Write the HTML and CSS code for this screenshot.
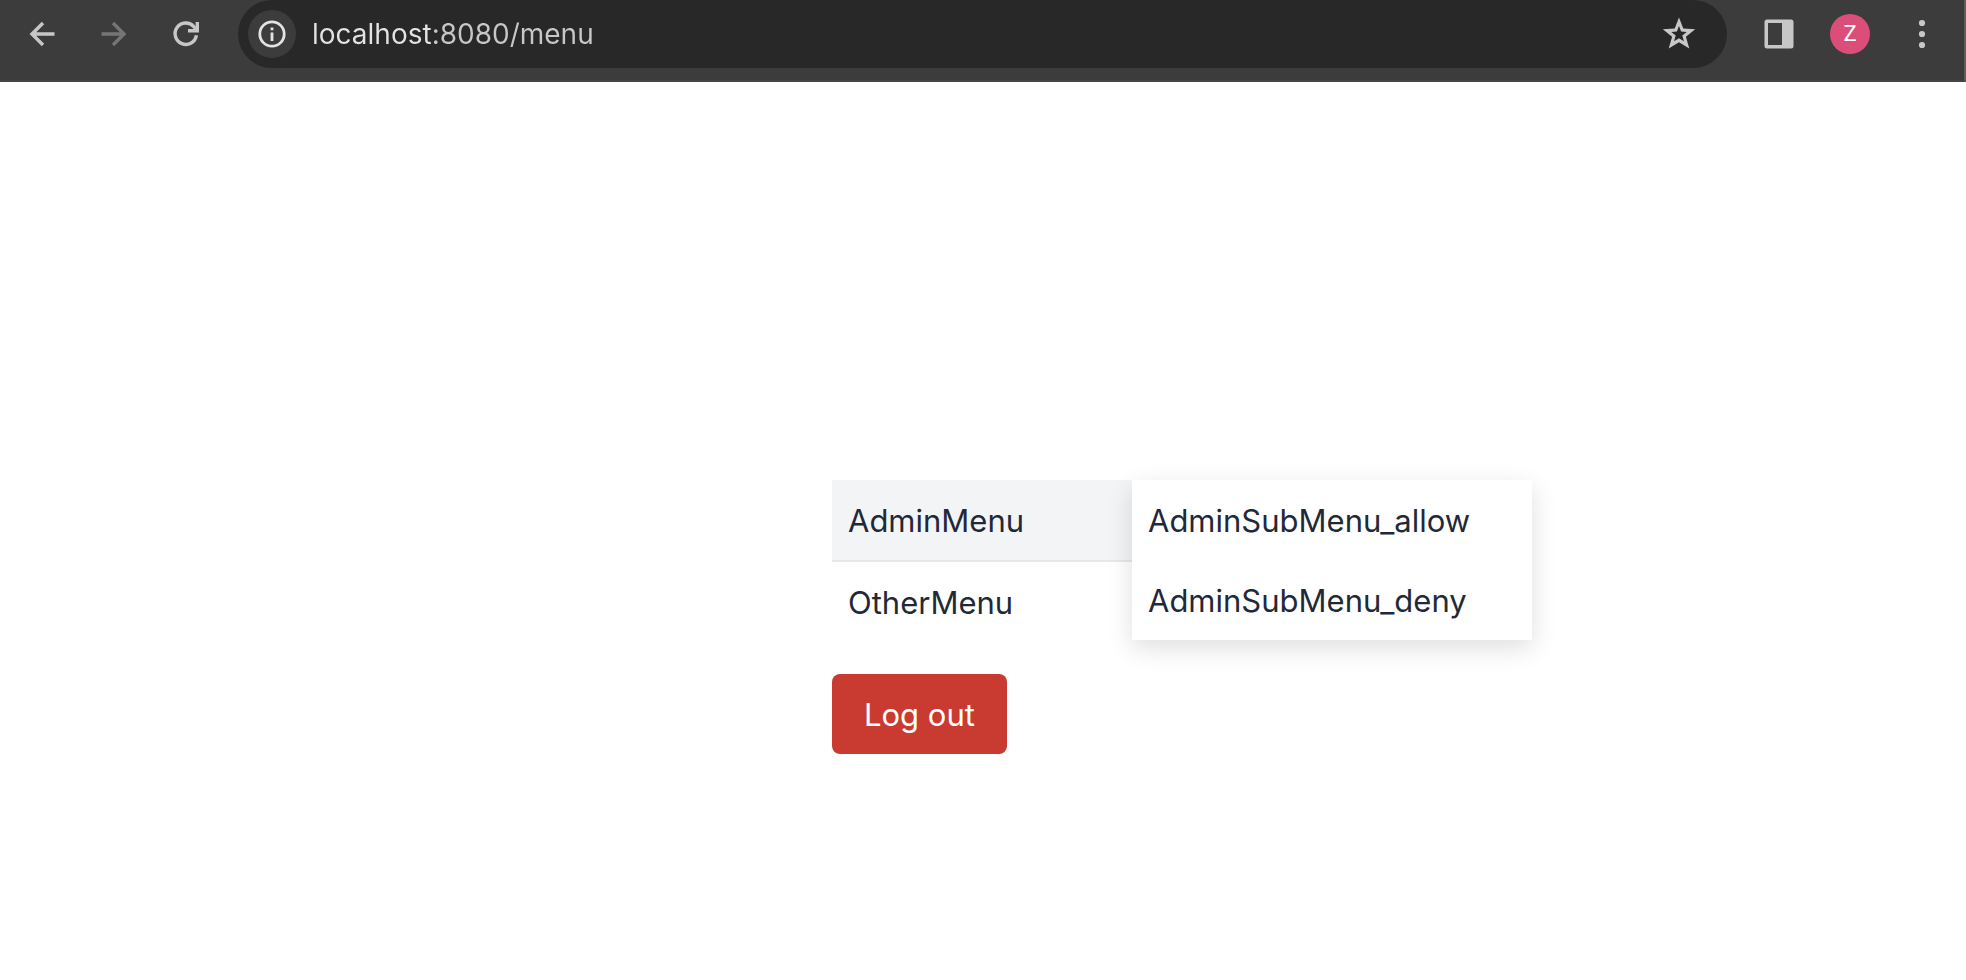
FILE: index.html
```html
<!DOCTYPE html>
<html lang="en">
<head>
<meta charset="utf-8">
<title>Menu</title>
<link rel="stylesheet" href="styles.css">
</head>
<body>
<header class="toolbar">
  <div class="nav-buttons">
    <button class="icon-button" type="button" aria-label="Back">
      <svg width="32" height="32" viewBox="0 0 32 32" fill="none" stroke="#c7c7c7" stroke-width="3.400"><path d="M28.500 16H6M17 5 6 16l11 11"/></svg>
    </button>
    <button class="icon-button" type="button" aria-label="Forward" disabled>
      <svg width="32" height="32" viewBox="0 0 32 32" fill="none" stroke="#757575" stroke-width="3.400"><path d="M3.500 16H26M15 5l11 11-11 11"/></svg>
    </button>
    <button class="icon-button" type="button" aria-label="Reload">
      <svg width="32" height="32" viewBox="0 0 32 32" fill="none" stroke="#c7c7c7" stroke-width="3.400"><path d="M26.400 17.200A10.700 10.700 0 1 1 23.800 8.600L27 12"/><path d="M18 12.700h9.300V4"/></svg>
    </button>
  </div>
  <form class="address-bar">
    <button class="site-info" type="button" aria-label="View site information">
      <svg width="28" height="28" viewBox="0 0 28 28"><circle cx="14" cy="14" r="12.200" fill="none" stroke="#e3e3e3" stroke-width="2.800"/><path fill="#e3e3e3" d="M12.600 12.500h2.800V21h-2.800zM12.600 7.500h2.800v2.800h-2.800z"/></svg>
    </button>
    <input class="address" type="text" value="localhost:8080/menu" aria-label="Address">
    <button class="icon-button" type="button" aria-label="Bookmark this page">
      <svg width="34" height="34" viewBox="0 0 34 34"><path fill="#c7c7c7" fill-rule="evenodd" d="M17 .5l4.300 10.900 11.900.9-9.300 7.500 3.400 11.700L17 25.200 6.700 31.500l3.400-11.700L.8 12.300l11.900-.9zM17 9l-2.100 5.400-5.600.5 4.400 3.700-1.600 5.600 4.900-3 4.900 3-1.600-5.600 4.400-3.700-5.600-.5z"/></svg>
    </button>
  </form>
  <div class="tools">
    <button class="icon-button" type="button" aria-label="Side panel">
      <svg width="30" height="30" viewBox="0 0 30 30"><path fill="#c7c7c7" fill-rule="evenodd" d="M3 .5h24a2.500 2.500 0 0 1 2.500 2.500v24a2.500 2.500 0 0 1-2.500 2.500H3A2.500 2.500 0 0 1 .5 27V3A2.500 2.500 0 0 1 3 .5zM4 4v22h14V4z"/></svg>
    </button>
    <button class="avatar" type="button" aria-label="Profile Z">Z</button>
    <button class="more" type="button" aria-label="More">
      <svg width="8" height="30" viewBox="0 0 8 30" fill="#c7c7c7"><circle cx="4" cy="4" r="3.100"/><circle cx="4" cy="15" r="3.100"/><circle cx="4" cy="26" r="3.100"/></svg>
    </button>
  </div>
</header>
<main class="page">
  <div class="panel">
    <nav aria-label="Main">
      <ul class="menu">
        <li class="menu-entry">
          <a class="menu-link active" href="#admin">AdminMenu</a>
          <ul class="submenu">
            <li><a class="menu-link" href="#allow">AdminSubMenu_allow</a></li>
            <li><a class="menu-link" href="#deny">AdminSubMenu_deny</a></li>
          </ul>
        </li>
        <li class="menu-entry"><a class="menu-link" href="#other">OtherMenu</a></li>
      </ul>
    </nav>
    <button class="logout" type="button">Log out</button>
  </div>
</main>
</body>
</html>
```

FILE: styles.css
```css
* {
  box-sizing: border-box;
}

body {
  margin: 0;
  background: #fff;
  color: #1f2937;
  font-family: Inter, "Liberation Sans", sans-serif;
  font-size: 31px;
  line-height: 48px;
}

button {
  padding: 0;
  border: 0;
  background: none;
  font: inherit;
}

svg {
  display: block;
}

ul {
  margin: 0;
  padding: 0;
  list-style: none;
}

.toolbar {
  display: flex;
  align-items: flex-start;
  background: #3c3c3c;
  border-bottom: 2px solid #474445;
  border-right: 2px solid #5c5c5c;
  padding-bottom: 12px;
}

.nav-buttons {
  display: flex;
  align-items: center;
  gap: 40px;
  height: 68px;
  padding: 0 36px 0 26px;
}

.address-bar {
  display: flex;
  flex: 1;
  align-items: center;
  height: 68px;
  padding: 0 31px 0 10px;
  border-radius: 34px;
  background: #282828;
}

.site-info {
  display: grid;
  place-items: center;
  width: 48px;
  height: 48px;
  border-radius: 50%;
  background: #3c3c3c;
}

.address {
  flex: 1;
  min-width: 0;
  height: 48px;
  margin-left: 16px;
  padding: 0;
  border: 0;
  outline: 0;
  background: linear-gradient(90deg, #e3e3e3 120px, #c7c7c7 120px);
  background-clip: text;
  -webkit-background-clip: text;
  -webkit-text-fill-color: transparent;
  font: 28px/48px Inter, "Liberation Sans", sans-serif;
}

.tools {
  display: flex;
  align-items: center;
  gap: 36px;
  height: 68px;
  padding: 0 38px 0 37px;
}

.more {
  margin-left: 12px;
}

.avatar {
  width: 40px;
  height: 40px;
  border-radius: 50%;
  background: #db4e79;
  color: #fff;
  font: 22px/40px Roboto, sans-serif;
}

.page {
  display: flex;
  justify-content: center;
  padding: 398px 2px 0 0;
}

.panel {
  width: 300px;
}

.menu-entry {
  position: relative;
}

.menu-entry + .menu-entry {
  border-top: 2px solid #e5e7eb;
}

.menu-link {
  display: block;
  padding: 17px 16px 15px;
  color: inherit;
  text-decoration: none;
}

.active {
  background: #f3f4f6;
}

.submenu {
  position: absolute;
  z-index: 1;
  top: 0;
  left: 100%;
  width: 400px;
  background: #fff;
  box-shadow: 0 8px 24px rgba(0, 0, 0, 0.13);
}

.logout {
  margin-top: 32px;
  padding: 17px 32px 15px;
  border-radius: 8px;
  background: #c93a31;
  color: #fff;
}
```
